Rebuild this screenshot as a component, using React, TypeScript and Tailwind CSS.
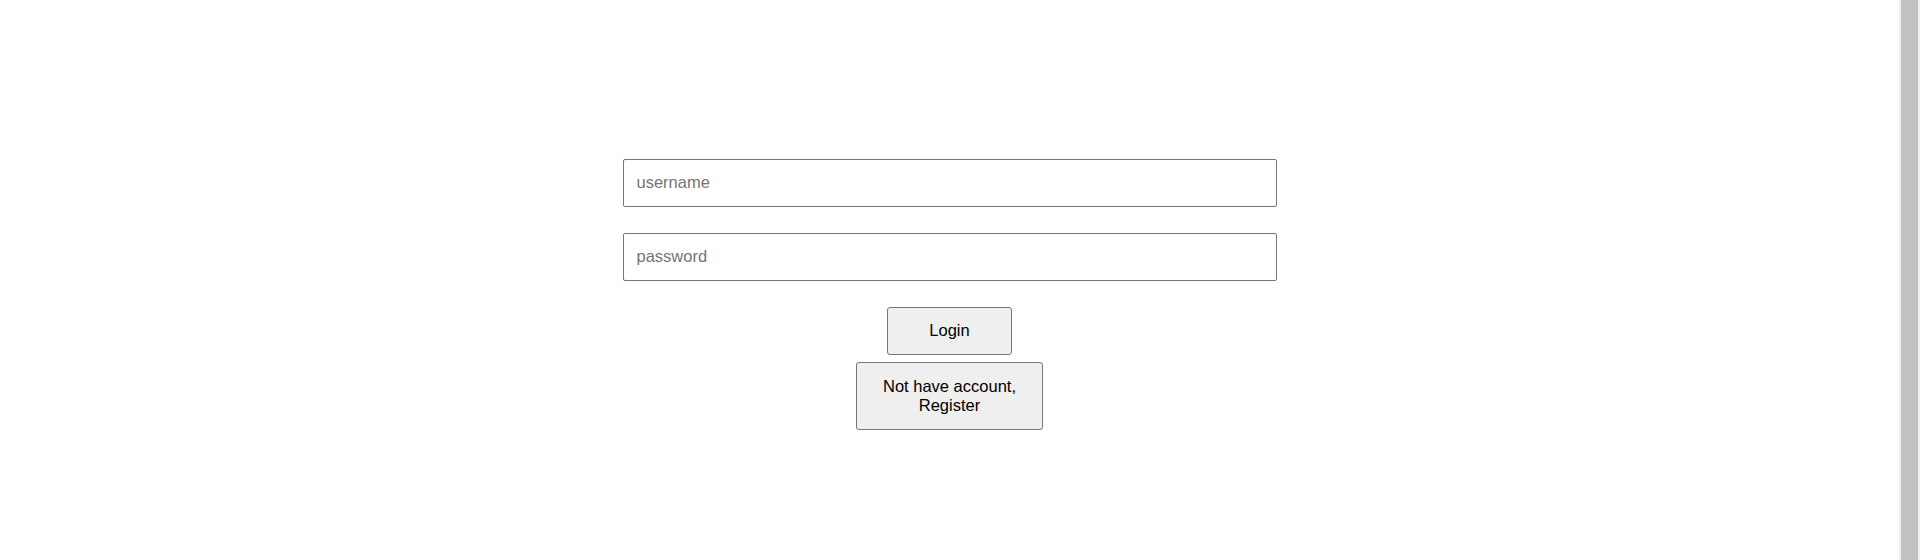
import React from "react";

export default function App() {
  return (
    <div className="flex h-[560px] w-full overflow-hidden bg-white">
      <div
        className="flex min-w-0 flex-1 flex-col items-center pt-[159px] text-[16.5px] text-black"
        style={{ fontFamily: '"Liberation Sans", Arial, sans-serif' }}
      >
        <input
          type="text"
          placeholder="username"
          className="box-border h-[48px] w-[654px] rounded-[2px] border border-[#767676] bg-white px-[13px] pb-[2px] text-[16.5px] outline-none placeholder:text-[#757575]"
        />
        <input
          type="password"
          placeholder="password"
          className="mt-[26px] box-border h-[48px] w-[654px] rounded-[2px] border border-[#767676] bg-white px-[13px] pb-[2px] text-[16.5px] outline-none placeholder:text-[#757575]"
        />
        <button className="mt-[26px] box-border flex h-[48px] w-[125px] items-center justify-center rounded-[3px] border border-[#767676] bg-[#efefef] pb-[2px] text-[16.5px] text-black">
          Login
        </button>
        <button className="mt-[7px] box-border flex h-[68px] w-[187px] items-center justify-center rounded-[3px] border border-[#767676] bg-[#efefef] px-[20px] text-center text-[16.5px] leading-[19px] text-black">
          Not have account, Register
        </button>
      </div>
      <div className="flex h-full w-[21px] shrink-0 bg-[#f1f1f1] px-[2px]">
        <div className="h-full w-full bg-[#c1c1c1]" />
      </div>
    </div>
  );
}
